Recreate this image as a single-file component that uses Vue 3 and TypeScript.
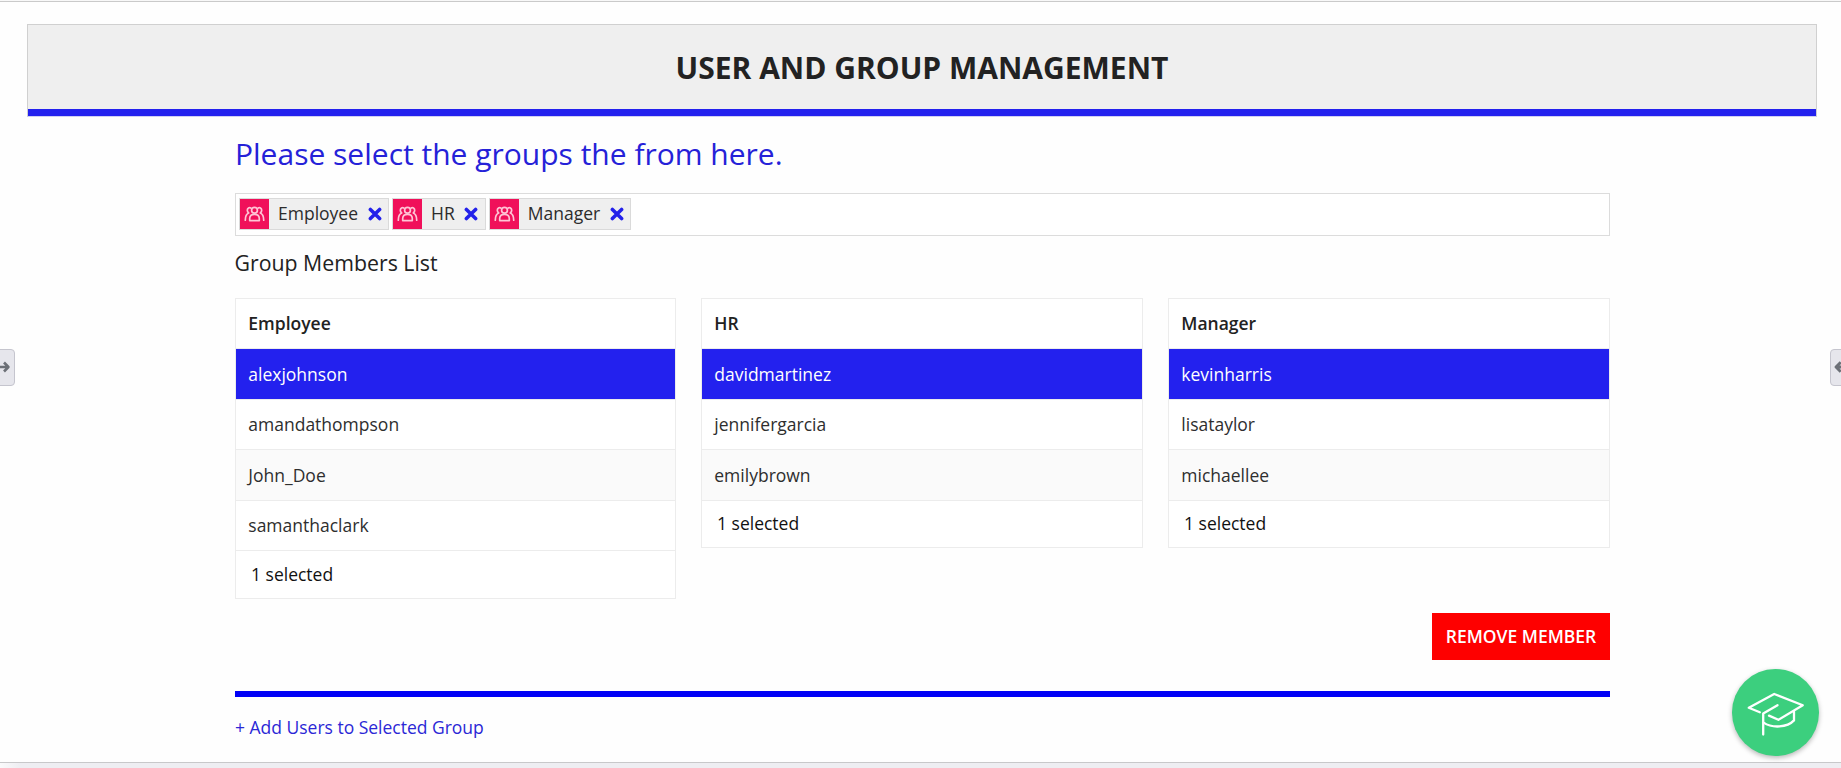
<script setup lang="ts">
interface Group {
  name: string
  members: string[]
  selected: string
}

const groups: Group[] = [
  { name: 'Employee', members: ['alexjohnson', 'amandathompson', 'John_Doe', 'samanthaclark'], selected: 'alexjohnson' },
  { name: 'HR', members: ['davidmartinez', 'jennifergarcia', 'emilybrown'], selected: 'davidmartinez' },
  { name: 'Manager', members: ['kevinharris', 'lisataylor', 'michaellee'], selected: 'kevinharris' },
]
</script>

<template>
  <div class="page">
    <header class="banner">
      <h1>USER AND GROUP MANAGEMENT</h1>
    </header>

    <main class="content">
      <h2>Please select the groups the from here.</h2>

      <div class="picker">
        <div v-for="group in groups" :key="group.name" class="tag">
          <span class="tag-icon">
            <svg width="21" height="17" viewBox="0 0 21 17" fill="none" stroke="#ffc4d5" stroke-width="1.7" stroke-linecap="round" stroke-linejoin="round">
              <path d="M6.800 2C5.300 1.100 3.300 2.100 3.300 4.300c0 1.200.6 2.100 1.400 2.700C2.400 8 1.300 10.200 1.300 14.200" />
              <path d="M14.200 2c1.500-.9 3.500.1 3.500 2.300 0 1.200-.6 2.100-1.400 2.700 2.300 1 3.400 3.200 3.400 7.200" />
              <circle cx="10.500" cy="4.300" r="2.900" />
              <path d="M5.700 14.600v-2c0-2.900 1.900-4.300 4.800-4.300s4.800 1.400 4.800 4.300v2z" />
            </svg>
          </span>
          <span class="tag-name">{{ group.name }}</span>
          <svg class="tag-close" width="14" height="14" viewBox="0 0 14 14" fill="none" stroke="#2321ea" stroke-width="3.6" stroke-linecap="round">
            <path d="M2.400 2.500l9.200 9M11.600 2.500l-9.200 9" />
          </svg>
        </div>
      </div>

      <h3>Group Members List</h3>

      <div class="lists">
        <section v-for="group in groups" :key="group.name" class="list">
          <div class="row head">{{ group.name }}</div>
          <div
            v-for="(member, i) in group.members"
            :key="member"
            class="row"
            :class="{ selected: member === group.selected, striped: i % 2 === 0 }"
          >{{ member }}</div>
          <div class="foot">1 selected</div>
        </section>
      </div>

      <button class="remove" type="button">REMOVE MEMBER</button>
      <div class="divider"></div>
      <a class="add">+ Add Users to Selected Group</a>
    </main>

    <div class="bottom-strip"></div>

    <div class="edge left">
      <svg width="15" height="12" viewBox="0 0 15 12" fill="none" stroke="#6c7077" stroke-width="2.8" stroke-linejoin="round">
        <path d="M0 6h9M4.300 1.200L9 6l-4.700 4.800" />
      </svg>
    </div>
    <div class="edge right">
      <svg width="15" height="12" viewBox="0 0 15 12" fill="none" stroke="#6c7077" stroke-width="2.8" stroke-linejoin="round">
        <path d="M15 6H5M9.700 1.200L5 6l4.700 4.800" />
      </svg>
    </div>

    <div class="fab">
      <svg width="60" height="46" viewBox="0 0 60 46" fill="none" stroke="#fff" stroke-width="2.3" stroke-linecap="round" stroke-linejoin="round">
        <path d="M13.800 21.200L2.800 16.800 28.200 3l28.600 11.200-24.400 14.600-9.400-4.200" />
        <path d="M31.500 14.200L17.200 22.600V43.500" />
        <path d="M17.600 31.600c8.500 5.800 23.500 5.200 30.400-2.200v-8.800" />
      </svg>
    </div>
  </div>
</template>

<style>
html,
body {
  margin: 0;
  overflow: hidden;
}
</style>

<style scoped>
.page {
  position: relative;
  display: flex;
  flex-direction: column;
  box-sizing: border-box;
  width: 1841px;
  height: 768px;
  overflow: hidden;
  padding-top: 22px;
  border-top: 1px solid #f8f8f8;
  box-shadow: inset 0 1px 0 #cacaca;
  background: #fefefe;
  color: #222;
  font-family: "Open Sans", sans-serif;
  font-size: 17.5px;
}

.banner {
  margin: 1px 24px 0 27px;
  box-sizing: border-box;
  height: 93px;
  border: 1px solid #d0d0d0;
  border-bottom-color: #cfcff3;
  background: #efefef;
  box-shadow: inset 0 -7px 0 #2321ee;
  text-align: center;
}

h1 {
  margin: 0;
  font-size: 30px;
  font-weight: 700;
  line-height: 85px;
}

.content {
  display: flex;
  flex-direction: column;
  flex: 1;
  width: 1375px;
  margin-left: 235px;
}

h2 {
  margin: 17px 0 19px;
  color: #2521d8;
  font-size: 30px;
  font-weight: 400;
  line-height: 40px;
}

.picker {
  display: flex;
  gap: 3px;
  box-sizing: border-box;
  height: 43px;
  padding: 4px 3px;
  border: 1px solid #dcdcdc;
  background: #fff;
}

.tag {
  display: flex;
  align-items: center;
  box-sizing: border-box;
  height: 32px;
  padding-right: 6.500px;
  border: 1px solid #dadada;
  background: #efefef;
}

.tag-icon {
  display: flex;
  align-items: center;
  justify-content: center;
  width: 29px;
  height: 30px;
  background: #f0105a;
}

.tag-name {
  margin: 0 9.500px 0 9px;
  padding-bottom: 2px;
  color: #2c2c2c;
  line-height: 28px;
}

h3 {
  margin: 12px 0 21px;
  font-size: 21.3px;
  font-weight: 400;
  line-height: 29px;
  text-indent: -0.500px;
}

.lists {
  display: grid;
  grid-template-columns: 441px 442px 442px;
  justify-content: space-between;
  align-items: start;
  height: 301px;
  margin-bottom: 14px;
}

.list {
  box-sizing: border-box;
  border: 1px solid #ececec;
  background: #fff;
}

.row {
  box-sizing: border-box;
  height: 50.500px;
  padding-left: 12.300px;
  border-bottom: 1px solid #ececec;
  color: #2e2e2e;
  line-height: 49px;
}

.row.head {
  height: 50px;
  color: #222;
  font-weight: 600;
  line-height: 48px;
}

.row.striped {
  line-height: 50px;
}

.row.striped:not(.selected) {
  background: #fafafa;
}

.row.selected {
  background: #2321ee;
  background-clip: padding-box;
  color: #fff;
}

.foot {
  height: 46.500px;
  padding-left: 15px;
  color: #111;
  line-height: 46px;
}

.striped + .foot {
  line-height: 44.500px;
}

.remove {
  align-self: flex-end;
  width: 178px;
  height: 47px;
  padding: 0 0 1px;
  border: 0;
  background: #fe0000;
  color: #fff;
  font: 600 17.500px "Open Sans", sans-serif;
}

.divider {
  height: 6px;
  margin: 31px 0 17px;
  background: #0000f6;
}

.add {
  color: #2b27d6;
  letter-spacing: -0.01px;
  line-height: 26px;
}

.bottom-strip {
  flex: none;
  height: 5px;
  border-top: 1px solid #c8c8ca;
  background: linear-gradient(90deg, #fafafb, #eeeef2 20px);
}

.edge {
  position: absolute;
  top: 348px;
  display: flex;
  align-items: center;
  box-sizing: border-box;
  width: 20px;
  height: 37px;
  padding-bottom: 2px;
  border: 1px solid #c5c5ce;
  border-radius: 4px;
  background: #e6e6ec;
}

.edge.left {
  left: -5px;
  padding-left: 4px;
}

.edge.right {
  left: 1830px;
}

.fab {
  position: absolute;
  top: 668px;
  left: 1732px;
  display: flex;
  align-items: center;
  justify-content: center;
  width: 86.500px;
  height: 86.500px;
  border-radius: 50%;
  background: #3ccf7e;
  box-shadow: 0 2px 5px rgba(0, 0, 0, 0.28);
}

.fab svg {
  margin: 4px 0 0 1px;
}
</style>
